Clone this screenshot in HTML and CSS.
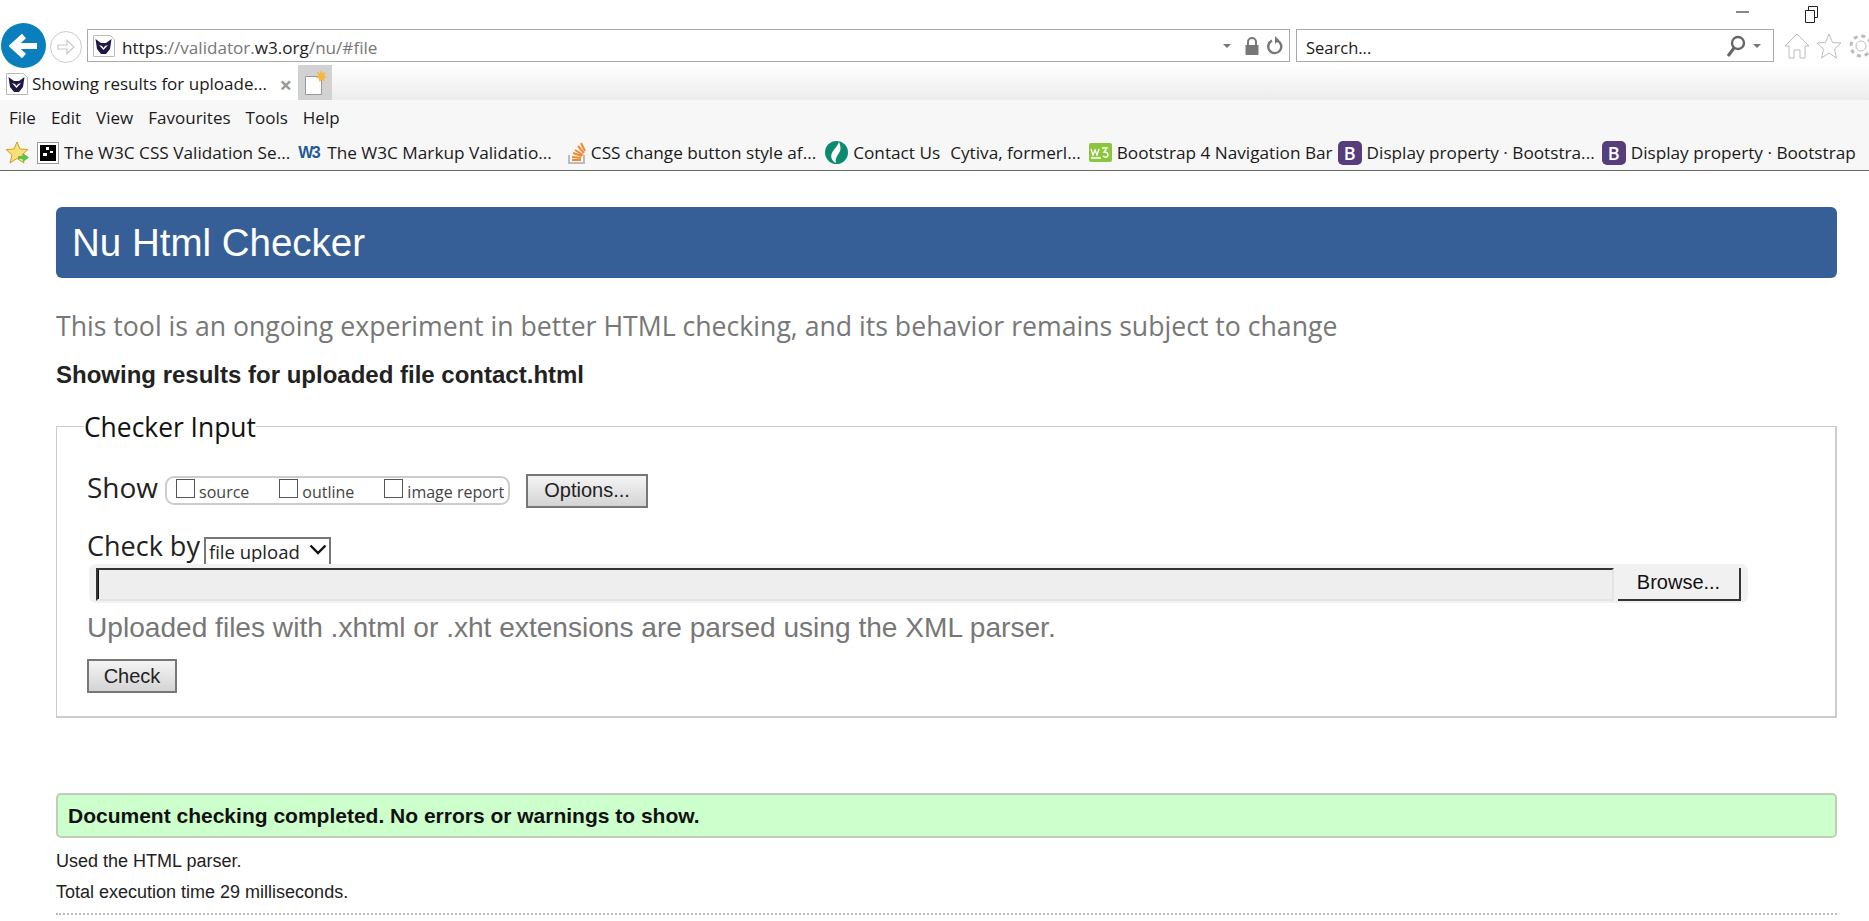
FILE: index.html
```html
<!DOCTYPE html>
<html lang="en">
<head>
    <meta charset="UTF-8" />
    <title>Showing results for uploaded file contact.html</title>
    <link rel="stylesheet" href="styles.css">
</head>
<body>

<div class="browser">
    <div class="window-row">
        <svg class="win-btn" width="14" height="14" viewBox="0 0 14 14"><path d="M0 7h13" stroke="#111" stroke-width="1"/></svg>
        <svg class="win-btn" width="16" height="18" viewBox="0 0 16 18"><path d="M1.500 5.500h9v12h-9zM4.500 5V1.500h9v11H11" fill="none" stroke="#222"/></svg>
    </div>

    <div class="nav-row">
        <div class="back-btn">
            <svg width="30" height="26" viewBox="0 0 30 26"><path d="M28 13H6M15 3L4 13l11 10" fill="none" stroke="#fff" stroke-width="6"/></svg>
        </div>
        <div class="forward-btn">
            <svg width="18" height="18" viewBox="0 0 18 18"><path d="M1 7h9V2.500l7 6.500-7 6.500V11H1z" fill="none" stroke="#c8c8c8" stroke-width="1.200"/></svg>
        </div>
        <div class="address-bar">
            <svg class="page-icon" width="24" height="24" viewBox="0 0 24 24"><path d="M1.500 1.500h17l4 4v17h-21z" fill="#fff" stroke="#bbb"/><path d="M3.500 5l5.500 4h5l5.500-4-1.500 10-4 5h-5l-4-5z" fill="#1f1a45"/><path d="M7 11l4.500 5 4.500-5-3 1-1.500 2-1.500-2z" fill="#fff"/></svg>
            <span class="url"><span class="url-dark">https</span>://validator.<span class="url-dark">w3.org</span>/nu/#file</span>
            <span class="caret caret-url"></span>
            <svg width="16" height="20" viewBox="0 0 16 20"><path d="M4 9V6a4 4 0 0 1 8 0v3" fill="none" stroke="#777" stroke-width="2"/><rect x="1.500" y="9" width="13" height="10" fill="#777"/></svg>
            <svg width="18" height="20" viewBox="0 0 18 20"><path d="M11 4.500a6.500 6.500 0 1 1-5 .200" fill="none" stroke="#777" stroke-width="2.400"/><path d="M9 0v8l4-4z" fill="#777"/></svg>
        </div>
        <div class="search-bar">
            <span class="search-text">Search...</span>
            <svg width="22" height="24" viewBox="0 0 22 24"><circle cx="13" cy="9" r="6" fill="none" stroke="#666" stroke-width="2.400"/><path d="M9 14l-6 8" stroke="#666" stroke-width="3"/></svg>
            <span class="caret"></span>
        </div>
        <div class="tool-icons">
            <svg width="26" height="26" viewBox="0 0 26 26"><path d="M13 1L1 13h4v12h5v-8h6v8h5V13h4z" fill="none" stroke="#bcbcbc"/></svg>
            <svg width="26" height="26" viewBox="0 0 26 26"><path d="M13 1l3.500 8.500 8.500.5-6.500 6 2 9-7.500-5-7.500 5 2-9L1 10l8.500-.5z" fill="none" stroke="#bcbcbc"/></svg>
            <svg width="26" height="26" viewBox="0 0 26 26"><circle cx="13" cy="13" r="5" fill="none" stroke="#bcbcbc"/><circle cx="13" cy="13" r="10" fill="none" stroke="#bcbcbc" stroke-width="3" stroke-dasharray="4 3.850"/></svg>
        </div>
    </div>

    <div class="tab-row">
        <div class="tab">
            <svg class="page-icon" width="24" height="24" viewBox="0 0 24 24"><path d="M1.500 1.500h17l4 4v17h-21z" fill="#fff" stroke="#bbb"/><path d="M3.500 5l5.500 4h5l5.500-4-1.500 10-4 5h-5l-4-5z" fill="#1f1a45"/><path d="M7 11l4.500 5 4.500-5-3 1-1.500 2-1.500-2z" fill="#fff"/></svg>
            <span class="tab-title">Showing results for uploade...</span>
            <span class="tab-close">×</span>
        </div>
        <div class="new-tab">
            <svg width="24" height="28" viewBox="0 0 24 28"><path d="M2.500 7.500h14l2 2v16h-16z" fill="#fff" stroke="#999"/><path d="M18 1l1.200 3.300L22.500 3l-1.300 3.500 2.800 1.500-3 1.200.8 3.300-3.300-1.500-2.200 2-.3-3.500-3-1 2.800-1.700L13.500 3l3.200 1z" fill="#f6b73c"/></svg>
        </div>
    </div>

    <div class="menu-row">
        <span>File</span><span>Edit</span><span>View</span><span>Favourites</span><span>Tools</span><span>Help</span>
    </div>

    <div class="fav-row">
        <svg class="fav-star" width="24" height="24" viewBox="0 0 24 24"><path d="M11 1l3 7 8 .5-6 5.500 2 8-7-4.500L4 22l2-8-6-5.500L8 8z" fill="#fbe07a" stroke="#c9a227"/><path d="M12 15h5v-3l6 4.500-6 4.500v-3h-5z" fill="#5cc24a"/></svg>
        <div class="fav fav-css">
            <span class="icon-css"><svg width="16" height="16" viewBox="0 0 16 16"><path d="M0 0h16v16H0z" fill="#000"/><path d="M6 2h3v3H6zM10 6h3v2h-3zM3 8h4v3H3z" fill="#fff"/></svg></span>
            <span>The W3C CSS Validation Se...</span>
        </div>
        <div class="fav">
            <span class="icon-w3">W3</span>
            <span>The W3C Markup Validatio...</span>
        </div>
        <div class="fav fav-stack">
            <svg width="18" height="22" viewBox="0 0 18 22"><path d="M1 13v8h15v-8" fill="none" stroke="#bbb" stroke-width="2"/><path d="M4 18h9M4 15l9 1M5 11l9 3M7 8l8 5M10 4l6 7M13 1l4 8" stroke="#f28a30" stroke-width="2"/></svg>
            <span>CSS change button style af...</span>
        </div>
        <div class="fav">
            <svg width="23" height="23" viewBox="0 0 23 23"><circle cx="11.500" cy="11.500" r="11.500" fill="#0b8a6f"/><path d="M14 1c2 5 2 8 0 11s-4 6-3 10c-4-2-6-6-4-10s5-6 7-11z" fill="#fff"/></svg>
            <span>Contact Us</span>
        </div>
        <div class="fav fav-cytiva">
            <span>Cytiva, formerl...</span>
        </div>
        <div class="fav fav-nav">
            <span class="icon-green">
                <svg width="20" height="14" viewBox="0 0 20 14"><path d="M1 3l2 6 2-5 2 5 2-6M12 2h5l-3 4c3 0 4 1 4 3s-3 3-5 1M1 12h10" fill="none" stroke="#fff" stroke-width="1.300"/></svg>
            </span>
            <span>Bootstrap 4 Navigation Bar</span>
        </div>
        <div class="fav fav-display">
            <span class="icon-b">B</span>
            <span>Display property · Bootstra...</span>
        </div>
        <div class="fav">
            <span class="icon-b">B</span>
            <span>Display property · Bootstrap</span>
        </div>
    </div>
</div>

<div class="page">
    <h1 class="page-title">Nu Html Checker</h1>
    <p class="subtitle">This tool is an ongoing experiment in better HTML checking, and its behavior remains subject to change</p>
    <p class="showing">Showing results for uploaded file contact.html</p>

    <fieldset class="checker">
        <legend>Checker Input</legend>

        <div class="show-row">
            <span class="row-label show-label">Show</span>
            <span class="show-options">
                <label><input type="checkbox" />source</label>
                <label><input type="checkbox" />outline</label>
                <label><input type="checkbox" />image report</label>
            </span>
            <button class="btn btn-options" type="button">Options...</button>
        </div>

        <div class="check-row">
            <span class="row-label">Check by</span>
            <span class="select-wrap">
                <select class="check-select"><option>file upload</option></select>
                <svg class="chevron" width="18" height="11" viewBox="0 0 18 11"><path d="M1.500 1.500L9 9l7.500-7.500" fill="none" stroke="#111" stroke-width="2.400"/></svg>
            </span>
        </div>

        <div class="file-field">
            <div class="file-box"></div>
            <div class="file-btn">Browse...</div>
        </div>

        <p class="hint">Uploaded files with .xhtml or .xht extensions are parsed using the XML parser.</p>

        <button class="btn btn-check" type="button">Check</button>
    </fieldset>

    <div class="success">Document checking completed. No errors or warnings to show.</div>
    <p class="stat">Used the HTML parser.</p>
    <p class="stat">Total execution time 29 milliseconds.</p>
    <div class="dots"></div>
</div>

</body>
</html>
```

FILE: styles.css
```css
html, body {
    height: 921px;
    overflow: hidden;
}

body {
    margin: 0;
    background-color: white;
    color: #111;
    font-family: "Liberation Sans", Arial, sans-serif;
}

/* browser chrome */
.browser {
    font-family: "Open Sans", "Noto Sans", sans-serif;
    font-size: 17px;
    color: #1a1a1a;
}

.window-row {
    height: 29px;
    display: flex;
    justify-content: flex-end;
    align-items: flex-start;
    gap: 54px;
    padding: 5px 49px 0 0;
    box-sizing: border-box;
}

.nav-row {
    height: 36px;
    display: flex;
    align-items: flex-start;
    position: relative;
    z-index: 1;
}

.nav-row > * {
    flex-shrink: 0;
}

.back-btn {
    width: 45px;
    height: 45px;
    margin: -6px 0 0 1px;
    border-radius: 50%;
    background-color: #0a7fbe;
    display: flex;
    align-items: center;
    justify-content: center;
}

.forward-btn {
    width: 30px;
    height: 30px;
    margin: 2px 0 0 4px;
    border: 1px solid #ccc;
    border-radius: 50%;
    display: flex;
    align-items: center;
    justify-content: center;
}

.address-bar, .search-bar {
    height: 33px;
    box-sizing: border-box;
    border: 1px solid #aaa;
    display: flex;
    align-items: center;
}

.address-bar {
    width: 1203px;
    margin-left: 5px;
    padding: 0 5px 0 4px;
    gap: 6px;
}

.page-icon {
    flex-shrink: 0;
}

.url {
    flex: 1;
    padding-top: 3px;
    font-size: 17.100px;
    color: #777;
}

.url-dark {
    color: #222;
}

.caret {
    width: 0;
    height: 0;
    border-left: 4px solid transparent;
    border-right: 4px solid transparent;
    border-top: 4px solid #777;
}

.caret-url {
    margin-right: 7px;
}

.search-bar {
    width: 478px;
    margin-left: 6px;
    padding: 0 12px 0 9px;
    gap: 6px;
}

.search-text {
    flex: 1;
    padding-top: 3px;
    font-size: 16.500px;
}

.tool-icons {
    display: flex;
    gap: 6px;
    margin: 4px 0 0 10px;
}

.tab-row {
    height: 35px;
    display: flex;
    background: linear-gradient(#ffffff, #ececec);
}

.tab {
    width: 298px;
    box-sizing: border-box;
    padding: 2px 6px 0 5px;
    display: flex;
    align-items: center;
    gap: 3px;
    background-color: white;
}

.tab-title {
    flex: 1;
    white-space: nowrap;
}

.tab-close {
    color: #999;
    font-size: 22px;
    font-weight: bold;
}

.new-tab {
    width: 34px;
    background-color: #d2d2d2;
    display: flex;
    align-items: center;
    justify-content: center;
}

.menu-row {
    height: 35px;
    box-sizing: border-box;
    padding: 0 0 1px 9px;
    background-color: #f7f7f7;
    display: flex;
    align-items: center;
    gap: 15px;
}

.fav-row {
    height: 36px;
    box-sizing: border-box;
    background-color: #f7f7f7;
    border-bottom: 1px solid #666;
    display: flex;
    align-items: center;
    padding-left: 6px;
    white-space: nowrap;
    font-size: 17.200px;
}

.fav-star {
    flex-shrink: 0;
    margin-right: 7px;
}

.fav {
    display: flex;
    flex-shrink: 0;
    align-items: center;
    gap: 5px;
    margin-right: 10px;
}

.fav-css {
    margin-right: 8px;
}

.fav-stack {
    margin: 0 9px 0 6px;
}

.fav-cytiva {
    margin-right: 8px;
}

.fav-nav {
    margin-right: 5px;
}

.fav-display {
    margin-right: 7px;
}

.icon-css {
    width: 22px;
    height: 22px;
    box-sizing: border-box;
    border: 1px solid #999;
    background-color: white;
    display: flex;
    align-items: center;
    justify-content: center;
}

.icon-w3 {
    width: 24px;
    color: #1d5a96;
    font-family: "Liberation Sans", sans-serif;
    font-weight: bold;
    font-size: 16px;
    letter-spacing: -1.500px;
}

.icon-green {
    width: 23px;
    height: 19px;
    background-color: #8cc63f;
    border-radius: 2px;
    display: flex;
    align-items: center;
    justify-content: center;
}

.icon-b {
    width: 24px;
    height: 24px;
    border-radius: 5px;
    background-color: #563d7c;
    color: white;
    font-size: 18px;
    font-weight: 600;
    text-align: center;
    line-height: 24px;
}

/* checker page */
.page {
    padding: 36px 32px 0 56px;
}

.page-title {
    margin: 0;
    height: 71px;
    padding-left: 16px;
    border-radius: 6px;
    background-color: #365f97;
    color: white;
    font-size: 38.500px;
    font-weight: normal;
    line-height: 71px;
}

.subtitle {
    margin: 30px 0 0 0;
    font-family: "Open Sans", sans-serif;
    font-size: 26.650px;
    line-height: 36px;
    color: #777;
}

.showing {
    margin: 16px 0 0 0;
    font-size: 24px;
    font-weight: bold;
    line-height: 30px;
    color: #222;
}

.checker {
    margin: 18px 0 0 0;
    padding: 0 0 23px 30px;
    height: 310px;
    box-sizing: border-box;
    border: 2px solid #ccc;
    border-width: 1px 2px 2px 1px;
}

.checker legend {
    margin-left: -3px;
    padding: 2px 0 1px 0;
    font-family: "Open Sans", sans-serif;
    font-size: 26.400px;
    line-height: 34px;
    color: #111;
}

.show-row {
    display: flex;
    align-items: center;
    margin-top: 27px;
    height: 34px;
}

.row-label {
    font-family: "Open Sans", sans-serif;
    font-size: 27px;
    color: #222;
}

.show-label {
    font-size: 28px;
    margin-bottom: 4px;
}

.show-options {
    display: flex;
    margin: 3px 0 0 7px;
    height: 29px;
    width: 345px;
    box-sizing: border-box;
    border: 2px solid #ccc;
    border-radius: 9px;
    padding-left: 9px;
}

.show-options label {
    font-family: "Open Sans", sans-serif;
    font-size: 16px;
    color: #444;
    white-space: nowrap;
    display: flex;
    align-items: flex-end;
    margin-right: 30px;
}

.show-options input {
    appearance: none;
    width: 19px;
    height: 19px;
    margin: 0 4px 5px 0;
    border: 1px solid #555;
    background-color: white;
}

.btn {
    font-family: "Liberation Sans", sans-serif;
    font-size: 20px;
    color: #222;
    height: 34px;
    box-sizing: border-box;
    border: 2px solid #777;
    background: linear-gradient(#f4f4f4, #d4d4d4);
    padding: 0;
}

.btn-options {
    width: 122px;
    margin: 3px 0 0 16px;
}

.check-row {
    display: flex;
    align-items: flex-end;
    margin-top: 31px;
    height: 27px;
}

.select-wrap {
    position: relative;
    display: block;
    margin-left: 4px;
    width: 127px;
    height: 27px;
    box-sizing: border-box;
    border: 2px solid #777;
    border-bottom: none;
}

.check-select {
    display: block;
    appearance: none;
    width: 100%;
    height: 23px;
    box-sizing: border-box;
    border: none;
    border-radius: 0;
    background-color: white;
    padding: 0 0 0 3px;
    font-family: "Open Sans", sans-serif;
    font-size: 18.500px;
    color: #222;
}

.chevron {
    position: absolute;
    right: 2px;
    top: 5px;
}

.file-field {
    margin: 0 0 0 2px;
    width: 1659px;
    height: 39px;
    box-sizing: border-box;
    padding: 4px 7px 2px 7px;
    border-radius: 7px;
    background-color: #f1f1f1;
    display: flex;
    gap: 4px;
}

.file-box {
    flex: 1;
    border-top: 2px solid #333;
    border-left: 2px solid #333;
    background-color: #eee;
    box-shadow: inset 1px 0 0 #111;
    border-bottom: 2px solid #e4e4e4;
    border-right: 2px solid #e4e4e4;
}

.file-btn {
    width: 123px;
    box-sizing: border-box;
    border-right: 2px solid #333;
    border-bottom: 2px solid #333;
    background-color: #f1f1f1;
    text-align: center;
    font-size: 20px;
    line-height: 29px;
    color: #111;
}

.hint {
    margin: 7px 0 0 0;
    font-size: 28.100px;
    line-height: 36px;
    color: #777;
}

.btn-check {
    display: block;
    width: 90px;
    margin-top: 13px;
}

.success {
    margin-top: 75px;
    height: 45px;
    box-sizing: border-box;
    padding-left: 10px;
    border: 2px solid #c0cdb8;
    border-radius: 5px;
    background-color: #ccffcc;
    font-size: 21px;
    font-weight: bold;
    line-height: 41px;
}

.stat {
    margin: 0;
    font-size: 18px;
    line-height: 31px;
    color: #222;
}

.success + .stat {
    margin-top: 8px;
}

.dots {
    margin-top: 5px;
    border-top: 2px dotted #bbb;
}
```
